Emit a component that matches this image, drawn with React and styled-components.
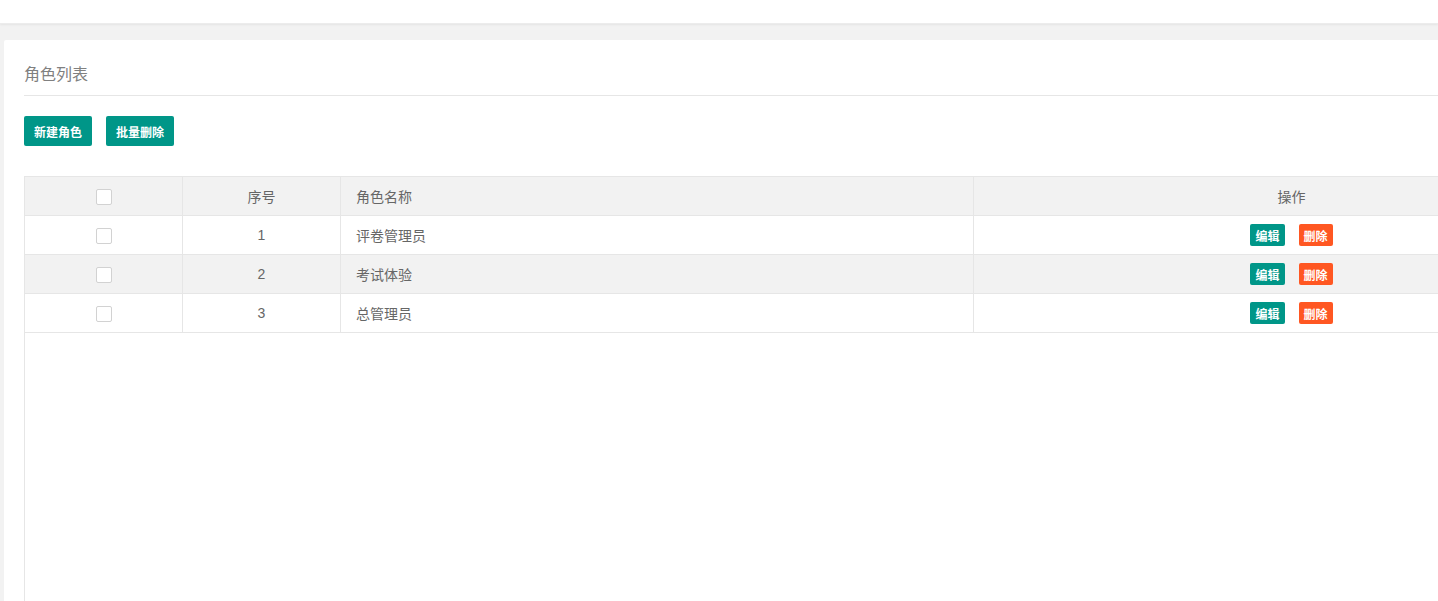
import React from "react"
import styled, { createGlobalStyle } from "styled-components"

const roles = [
  { id: 1, name: "评卷管理员" },
  { id: 2, name: "考试体验" },
  { id: 3, name: "总管理员" },
]

const GlobalStyle = createGlobalStyle`
  html, body {
    margin: 0;
    padding: 0;
    background: #f2f2f2;
    overflow: hidden;
  }
  body {
    font-family: "Liberation Sans", "Noto Sans CJK SC", sans-serif;
    color: #666;
    font-size: 14px;
  }
`

const TopBar = styled.div`
  height: 24px;
  background: #fff;
  box-shadow: 0 1px 2px rgba(0, 0, 0, 0.06);
  border-bottom: 1px solid #ececec;
  box-sizing: border-box;
`

const Main = styled.div`
  padding: 16px 0 0 4px;
  width: 1630px;
`

const Card = styled.div`
  background: #fff;
  border-radius: 2px;
  padding: 14px 20px 0;
  height: 700px;
`

const CardHeader = styled.div`
  height: 41px;
  line-height: 42px;
  border-bottom: 1px solid #e6e6e6;
  font-size: 16px;
  color: #808080;
`

const Toolbar = styled.div`
  display: flex;
  gap: 14px;
  padding-top: 20px;
`

const Button = styled.button`
  height: ${(p) => (p.$small ? "22px" : "30px")};
  padding: 0 ${(p) => (p.$small ? "5px" : "10px")};
  border: none;
  border-radius: 2px;
  background: ${(p) => (p.$danger ? "#ff5722" : "#009688")};
  color: #fff;
  font-family: "Liberation Sans", "Noto Sans CJK SC", sans-serif;
  font-size: 12px;
  font-weight: bold;
  white-space: nowrap;
  cursor: pointer;
`

const TableBox = styled.div`
  margin-top: 30px;
  border: 1px solid #e6e6e6;
  height: 560px;
`

const Table = styled.table`
  width: 1586px;
  margin: -1px 0 0 -1px;
  border-collapse: collapse;
  table-layout: fixed;
`

const Row = styled.tr`
  background: ${(p) => (p.$stripe ? "#f2f2f2" : "#fff")};
`

const Cell = styled.td`
  height: 39px;
  padding: 0 15px;
  border: 1px solid #e6e6e6;
  box-sizing: border-box;
  text-align: ${(p) => p.$align || "left"};
  font-size: 14px;
  color: #666;
  vertical-align: middle;
`

const Check = styled.span`
  display: inline-block;
  width: 16px;
  height: 16px;
  border: 1px solid #d2d2d2;
  border-radius: 2px;
  background: #fff;
  box-sizing: border-box;
  vertical-align: middle;
`

const Actions = styled.div`
  display: flex;
  justify-content: center;
  gap: 14px;
`

export default function App() {
  return (
    <>
      <GlobalStyle />
      <TopBar />
      <Main>
        <Card>
          <CardHeader>角色列表</CardHeader>
          <Toolbar>
            <Button>新建角色</Button>
            <Button>批量删除</Button>
          </Toolbar>
          <TableBox>
            <Table>
              <colgroup>
                <col style={{ width: 158 }} />
                <col style={{ width: 158 }} />
                <col style={{ width: 633 }} />
                <col />
              </colgroup>
              <tbody>
                <Row $stripe>
                  <Cell $align="center"><Check /></Cell>
                  <Cell $align="center">序号</Cell>
                  <Cell>角色名称</Cell>
                  <Cell $align="center">操作</Cell>
                </Row>
                {roles.map((r, i) => (
                  <Row key={r.id} $stripe={i % 2 === 1}>
                    <Cell $align="center"><Check /></Cell>
                    <Cell $align="center">{r.id}</Cell>
                    <Cell>{r.name}</Cell>
                    <Cell>
                      <Actions>
                        <Button $small>编辑</Button>
                        <Button $small $danger>删除</Button>
                      </Actions>
                    </Cell>
                  </Row>
                ))}
              </tbody>
            </Table>
          </TableBox>
        </Card>
      </Main>
    </>
  )
}
